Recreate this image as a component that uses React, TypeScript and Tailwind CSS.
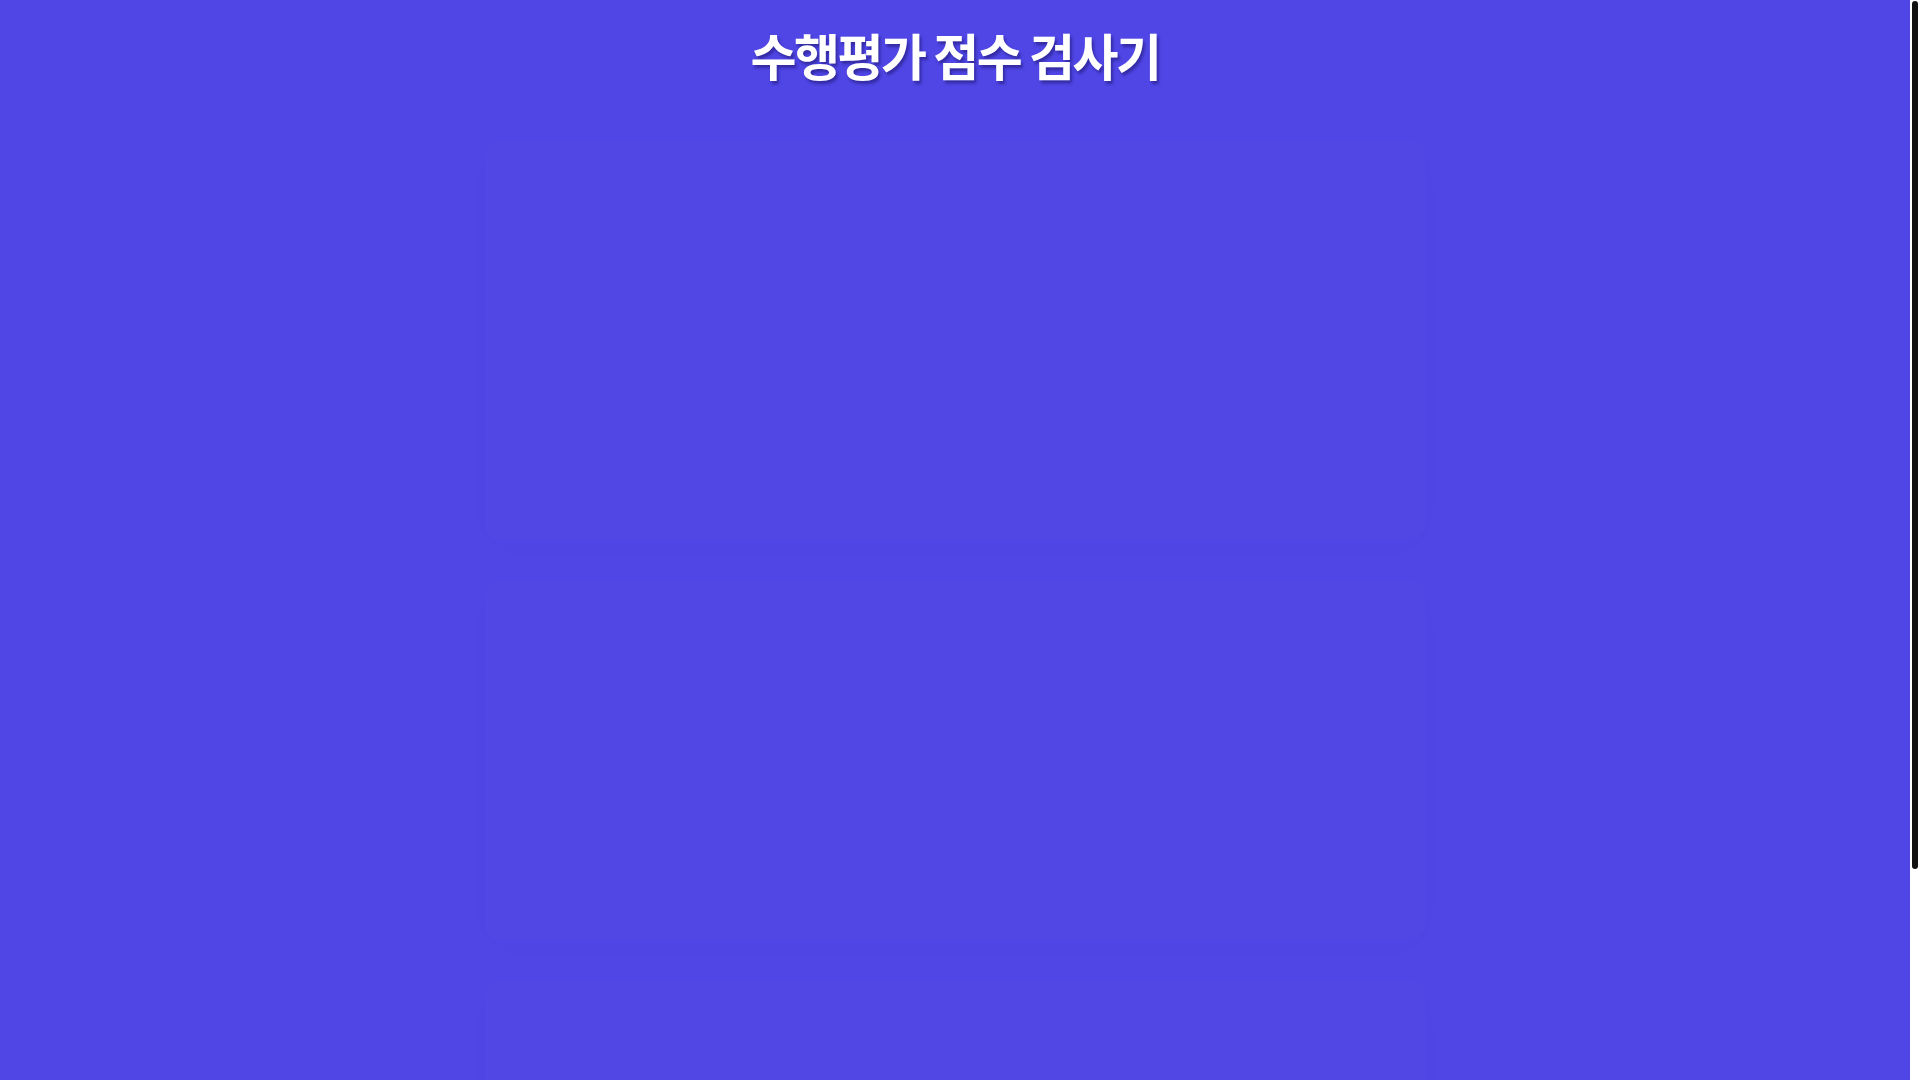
export default function App() {
  return (
    <div className="flex h-screen bg-[#4f46e5] font-['Noto_Sans_CJK_KR','Noto_Sans',sans-serif]">
      <main className="flex-1 overflow-hidden">
        <div className="px-8 pt-[20px] pb-10">
          <h1 className="text-center text-[50px] leading-[68px] font-bold tracking-[-0.05em] text-white [text-shadow:2px_3px_3px_rgba(30,20,110,0.55)]">
            수행평가 점수 검사기
          </h1>

          <div className="mx-auto mt-[52px] flex max-w-[940px] flex-col gap-10">
            <div className="h-[400px] rounded-2xl bg-white/[0.004] shadow-[0_8px_40px_rgba(0,0,0,0.012)]" />
            <div className="h-[360px] rounded-2xl bg-white/[0.004] shadow-[0_8px_40px_rgba(0,0,0,0.012)]" />
            <div className="h-[300px] rounded-2xl bg-white/[0.004] shadow-[0_8px_40px_rgba(0,0,0,0.012)]" />
          </div>
        </div>
      </main>

      {/* page scrollbar */}
      <aside className="flex w-[10px] shrink-0 flex-col bg-white pt-px">
        <div className="ml-[2px] h-[868px] w-[6px] rounded-full bg-[#111111]" />
      </aside>
    </div>
  );
}
